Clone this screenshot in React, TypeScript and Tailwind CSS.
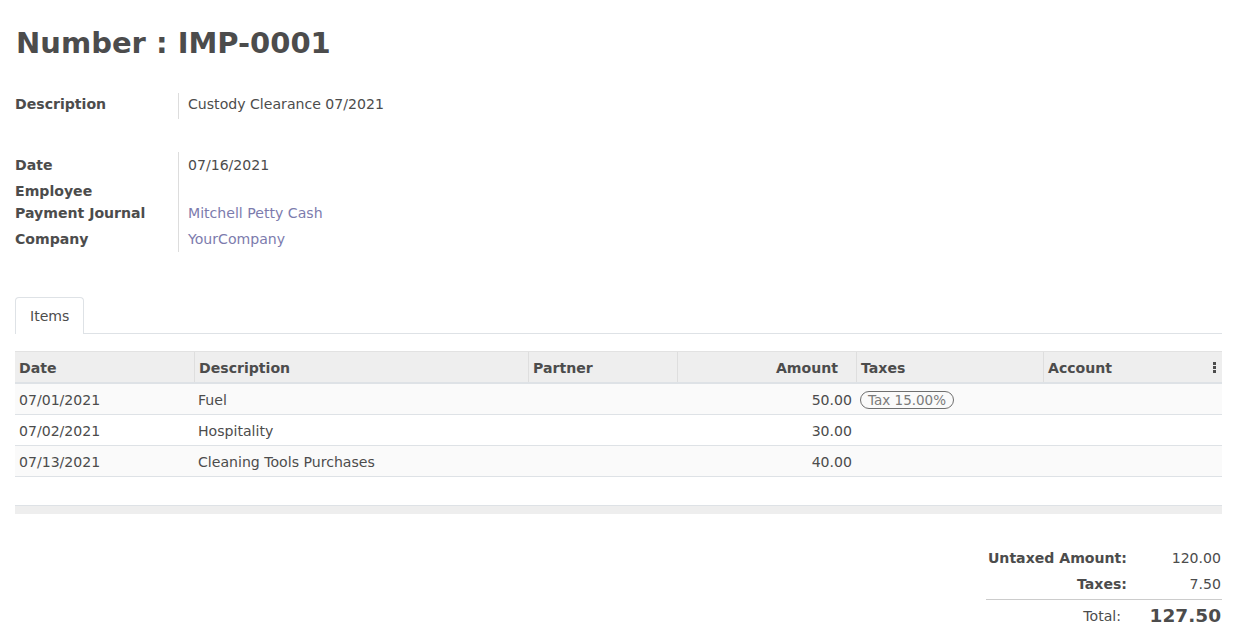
import React from "react";

const rows = [
  { date: "07/01/2021", desc: "Fuel", amount: "50.00", tax: "Tax 15.00%" },
  { date: "07/02/2021", desc: "Hospitality", amount: "30.00", tax: "" },
  { date: "07/13/2021", desc: "Cleaning Tools Purchases", amount: "40.00", tax: "" },
];

function Label({ children }: { children?: React.ReactNode }) {
  return <div className="font-bold pt-[4px] leading-[18px]">{children}</div>;
}
function Value({ children, link }: { children?: React.ReactNode; link?: boolean }) {
  return (
    <div className={"border-l border-[#dddddd] pl-[9px] pt-[4px] pb-[4px] leading-[18px] " + (link ? "text-[#7c7bad]" : "")}>
      {children}
    </div>
  );
}

export default function App() {
  return (
    <div className="min-h-[635px] bg-white px-[15px] pt-[26px] font-['DejaVu_Sans',sans-serif] text-[14.1px] text-[#4c4c4c]">
      <h1 className="text-[29px] font-bold leading-[34px] pl-[1px]">Number : IMP-0001</h1>

      <div className="mt-[33px] grid grid-cols-[163px_1fr]">
        <div className="font-bold pt-[2px] leading-[18px]">Description</div>
        <div className="border-l border-[#dddddd] pl-[9px] pt-[2px] pb-[6px] leading-[18px]">Custody Clearance 07/2021</div>
      </div>

      <div className="mt-[33px] grid grid-cols-[163px_1fr]">
        <Label>Date</Label>
        <Value>07/16/2021</Value>
        <Label>Employee</Label>
        <Value></Value>
        <Label>Payment Journal</Label>
        <Value link>Mitchell Petty Cash</Value>
        <Label>Company</Label>
        <Value link>YourCompany</Value>
      </div>

      <div className="mt-[45px] flex border-b border-[#dee2e6]">
        <div className="-mb-px rounded-t-[4px] border border-b-0 border-[#dee2e6] bg-white px-[14px] pt-[9px] pb-[9px] leading-[18px]">
          Items
        </div>
      </div>

      <div className="mt-[17px]">
        <div className="grid grid-cols-[179px_334px_149px_179px_187px_1fr] border-t border-[#e2e2e2] border-b-2 border-b-[#dee2e6] bg-[#eeeeee] font-bold leading-[18px]">
          <div className="h-[30px] pl-[4px] pt-[7px]">Date</div>
          <div className="h-[30px] border-l border-[#dedede] pl-[4px] pt-[7px]">Description</div>
          <div className="h-[30px] border-l border-[#dedede] pl-[4px] pt-[7px]">Partner</div>
          <div className="h-[30px] border-l border-[#dedede] pr-[18px] pt-[7px] text-right">Amount</div>
          <div className="h-[30px] border-l border-[#dedede] pl-[4px] pt-[7px]">Taxes</div>
          <div className="relative h-[30px] border-l border-[#dedede] pl-[4px] pt-[7px]">
            Account
            <svg className="absolute right-[6px] top-[10px]" width="3" height="11" viewBox="0 0 3 11">
              <rect x="0" y="0" width="3" height="3" fill="#4c4c4c" />
              <rect x="0" y="4" width="3" height="3" fill="#4c4c4c" />
              <rect x="0" y="8" width="3" height="3" fill="#4c4c4c" />
            </svg>
          </div>
        </div>
        {rows.map((r, i) => (
          <div
            key={i}
            className={
              "grid h-[31px] grid-cols-[179px_334px_149px_179px_187px_1fr] items-center border-b border-[#dee2e6] pt-[1px] leading-[18px] " +
              (i % 2 === 0 ? "bg-[#fafafa]" : "bg-white")
            }
          >
            <div className="pl-[4px]">{r.date}</div>
            <div className="pl-[4px]">{r.desc}</div>
            <div></div>
            <div className="pr-[4px] text-right">{r.amount}</div>
            <div className="pl-[4px]">
              {r.tax && (
                <span className="inline-block rounded-full border-[1.5px] border-[#6f6f6f] px-[7px] text-[13.5px] leading-[16px] text-[#7a7a7a]">
                  {r.tax}
                </span>
              )}
            </div>
            <div></div>
          </div>
        ))}
        <div className="mt-[28px] h-[9px] border-t border-[#dee2e6] bg-[#eeeeee]"></div>
      </div>

      <div className="mt-[31px] flex justify-end">
        <div className="w-[236px]">
          <div className="grid grid-cols-[1fr_90px] leading-[18px]">
            <div className="h-[26px] pt-[4px] pr-[5px] text-right font-bold">Untaxed Amount:</div>
            <div className="h-[26px] pt-[4px] pr-[1px] text-right">120.00</div>
            <div className="h-[26px] pt-[4px] pr-[5px] text-right font-bold">Taxes:</div>
            <div className="h-[26px] pt-[4px] pr-[1px] text-right">7.50</div>
          </div>
          <div className="mt-[2px] grid grid-cols-[1fr_90px] items-center border-t border-[#cccccc] pt-[3px]">
            <div className="pr-[11px] text-right leading-[26px]">Total:</div>
            <div className="pr-[1px] text-right text-[18.5px] font-bold leading-[26px]">127.50</div>
          </div>
        </div>
      </div>
    </div>
  );
}
